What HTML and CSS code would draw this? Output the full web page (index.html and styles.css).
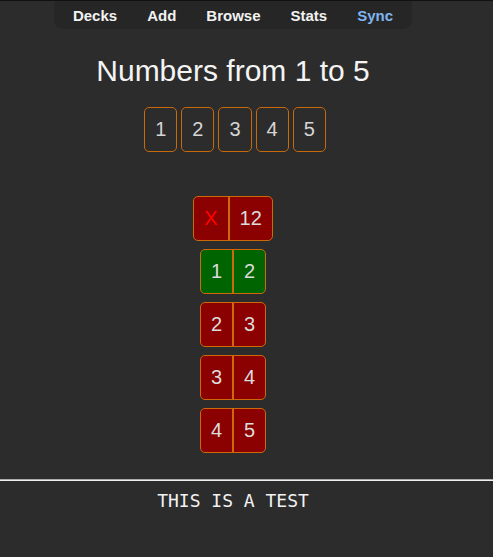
FILE: index.html
```html
<!DOCTYPE html>
<html>
<head>
<meta charset="utf-8">
<link rel="stylesheet" href="styles.css">
</head>
<body>
<div class="column">
  <nav class="toolbar">
    <a class="tb-link">Decks</a>
    <a class="tb-link">Add</a>
    <a class="tb-link">Browse</a>
    <a class="tb-link">Stats</a>
    <a class="tb-link sync">Sync</a>
  </nav>
  <h1 class="title">Numbers from 1 to 5</h1>
  <div class="choices">
    <span class="box">1</span>
    <span class="box">2</span>
    <span class="box">3</span>
    <span class="box">4</span>
    <span class="box">5</span>
  </div>
  <div class="pairs">
    <div class="pair wrong"><span class="cell mark">X</span><span class="cell">12</span></div>
    <div class="pair right"><span class="cell">1</span><span class="cell">2</span></div>
    <div class="pair wrong"><span class="cell">2</span><span class="cell">3</span></div>
    <div class="pair wrong"><span class="cell">3</span><span class="cell">4</span></div>
    <div class="pair wrong"><span class="cell">4</span><span class="cell">5</span></div>
  </div>
</div>
<hr class="divider">
<div class="column">
  <div class="answer">THIS IS A TEST</div>
</div>
</body>
</html>
```

FILE: styles.css
```css
html, body {
  margin: 0;
  padding: 0;
  background: #2c2c2c;
}
body {
  border-top: 1px solid #111;
  font-family: "Liberation Sans", Arial, sans-serif;
  color: #eeeeee;
}
.column {
  margin-right: 27px;
  display: flex;
  flex-direction: column;
  align-items: center;
}
.toolbar {
  display: flex;
  height: 28px;
  padding: 0 4px;
  background: #262626;
  border-radius: 0 0 9px 9px;
}
.tb-link {
  padding: 1px 15px 0;
  font-weight: bold;
  font-size: 15px;
  line-height: 27px;
  color: #f2f2f2;
}
.tb-link.sync {
  color: #7fb5ef;
}
.title {
  margin: 25px 0 0;
  font-size: 30px;
  line-height: 34px;
  font-weight: normal;
  color: #f4f4f4;
}
.choices {
  display: flex;
  gap: 4px;
  margin-top: 19px;
  padding-left: 4px;
}
.box {
  padding: 10px;
  font-size: 20px;
  line-height: 23px;
  border: 1px solid #c8690a;
  border-radius: 5px;
  color: #d6d6d6;
}
.pairs {
  margin-top: 44px;
  display: flex;
  flex-direction: column;
  align-items: center;
  gap: 8px;
}
.pair {
  display: flex;
  border: 1px solid #cc6a0a;
  border-radius: 5px;
  overflow: hidden;
}
.pair.wrong { background: #8b0000; }
.pair.right { background: #006400; }
.cell {
  padding: 10px;
  font-size: 20px;
  line-height: 23px;
  color: #dcdcdc;
}
.cell + .cell {
  border-left: 2px solid #cc6a0a;
}
.cell.mark {
  color: #ff0000;
}
.divider {
  margin: 26px 0 0;
  border: 0;
  border-top: 1px solid #aaaaaa;
  border-bottom: 1px solid #f0f0f0;
  height: 0;
}
.answer {
  margin-top: 9px;
  font-family: "DejaVu Sans Mono", monospace;
  font-size: 18px;
  line-height: 21px;
  color: #f2f2f2;
}
```
